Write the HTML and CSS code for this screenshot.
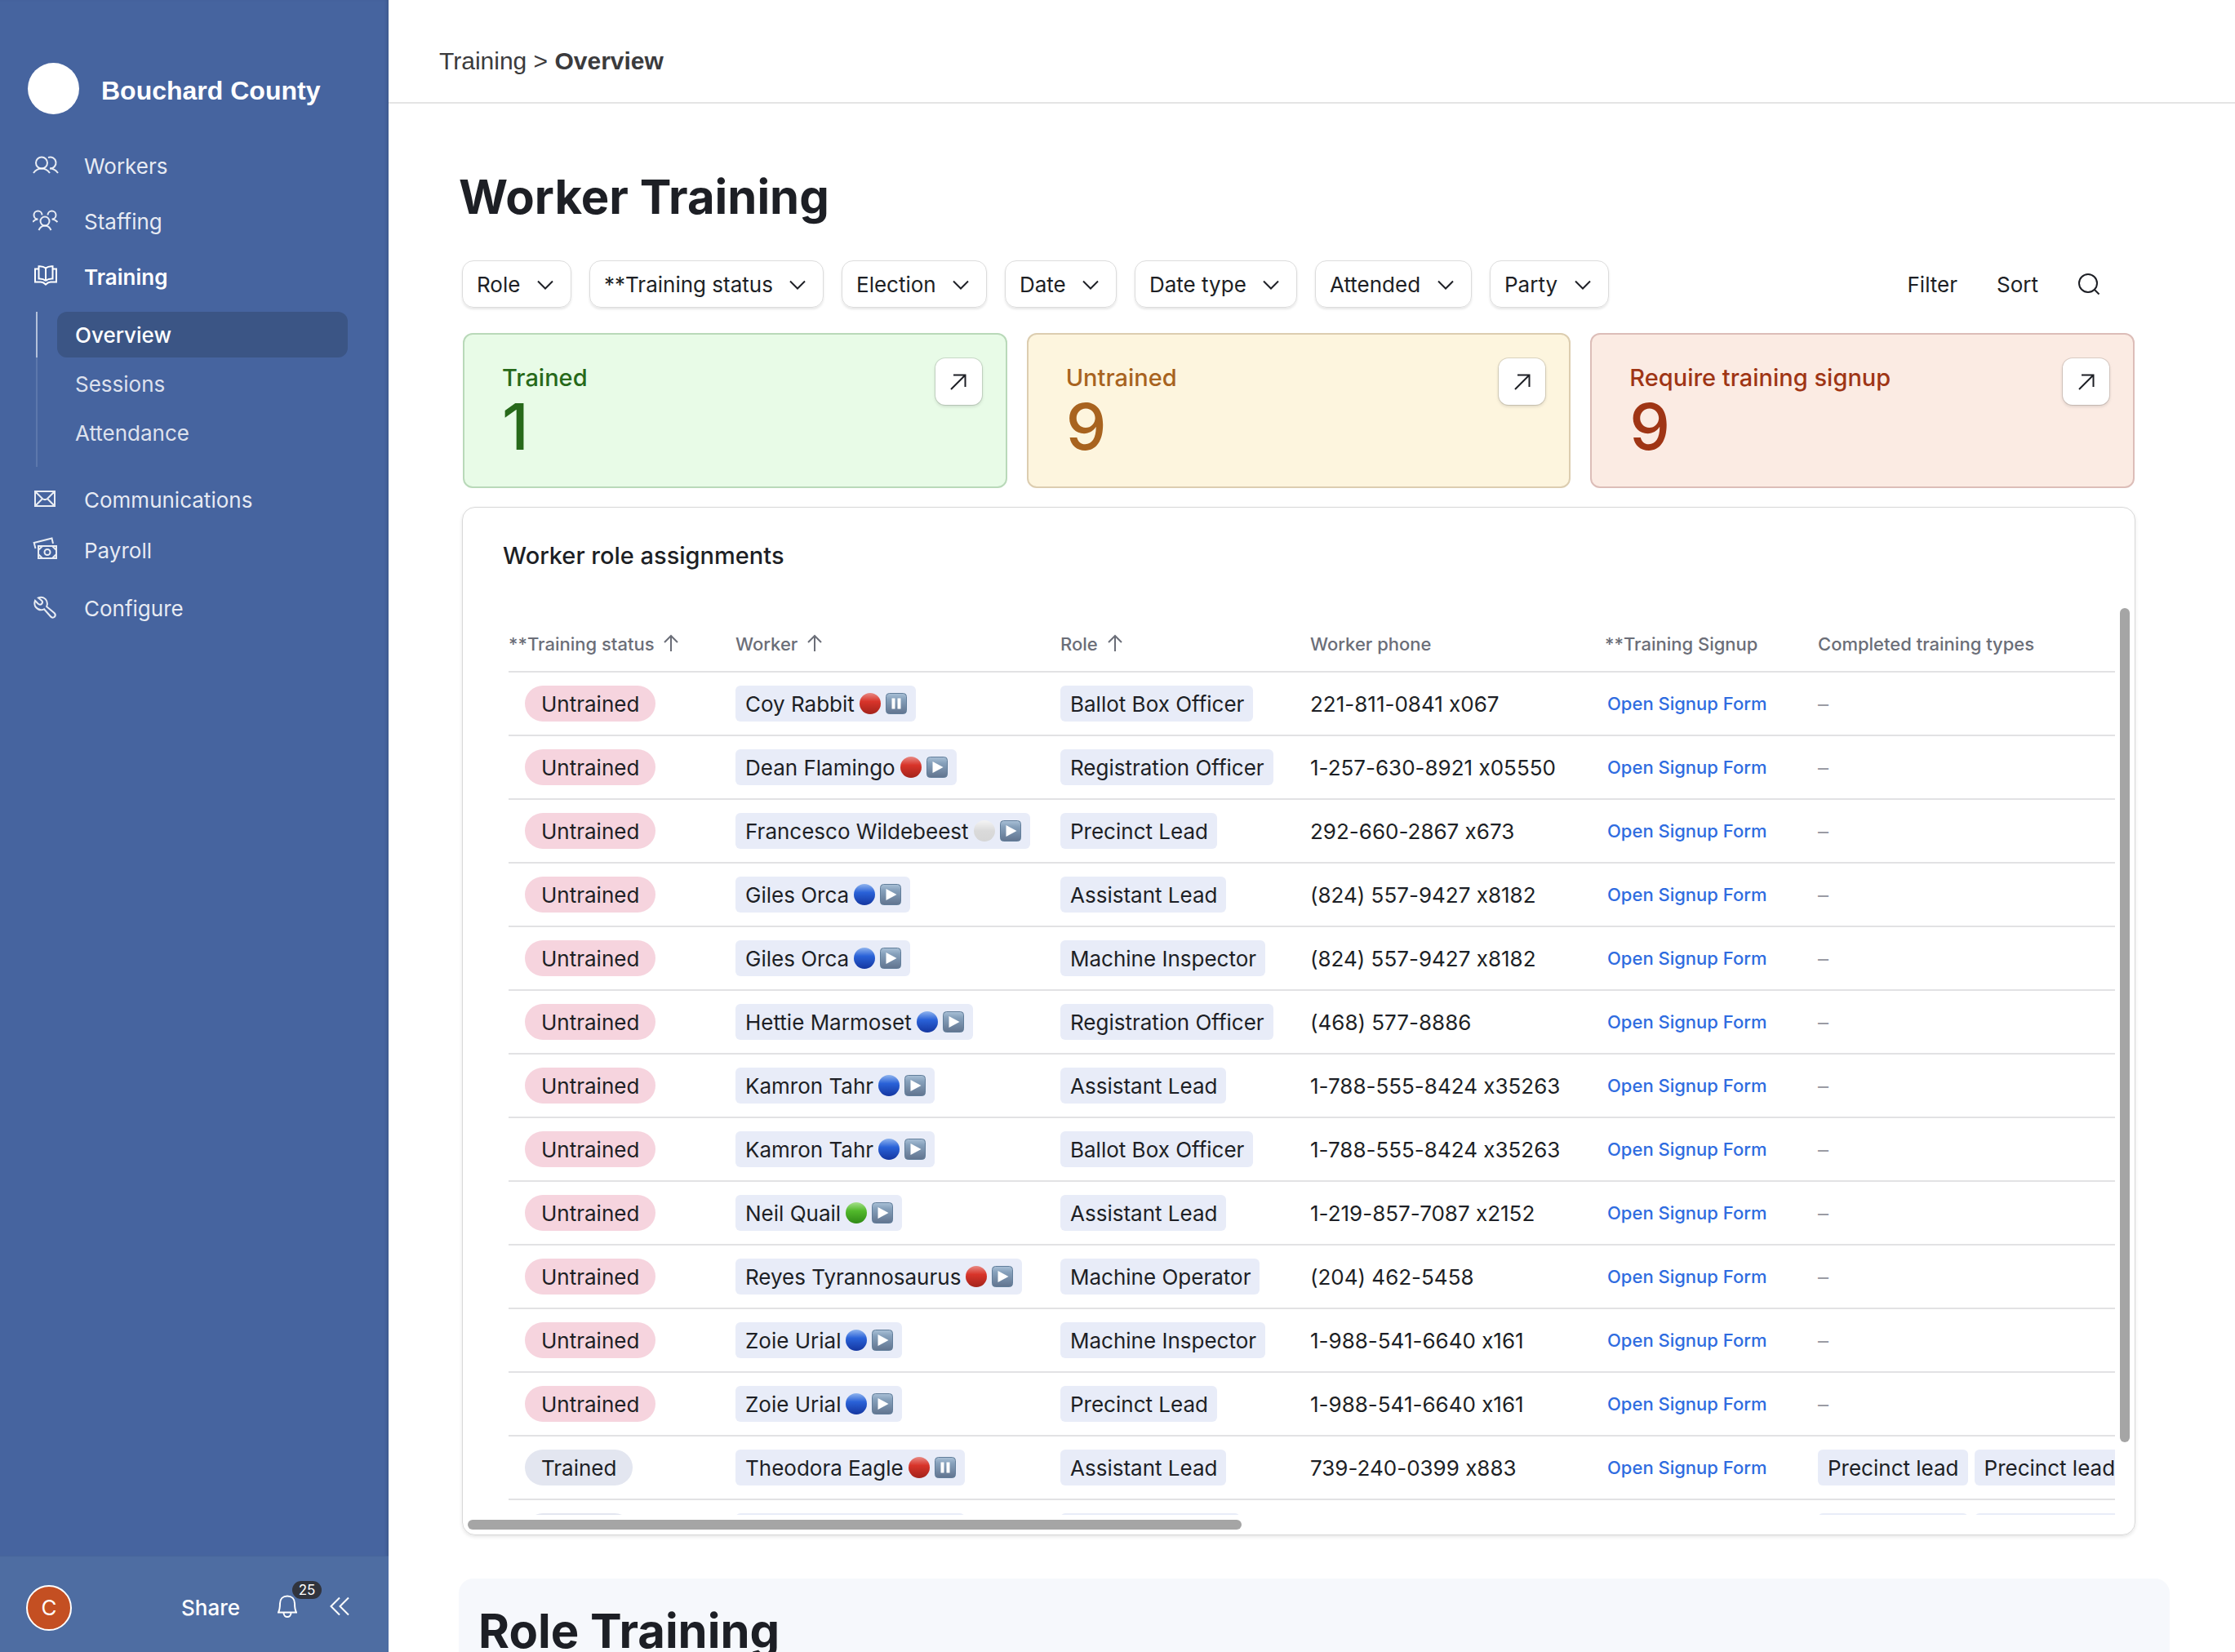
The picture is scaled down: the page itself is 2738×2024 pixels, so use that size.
FILE: index.html
```html
<!DOCTYPE html>
<html lang="en">
<head>
    <meta charset="UTF-8">
    <meta name="viewport" content="width=device-width, initial-scale=1.0">
    <title>Worker Training</title>
    <link rel="stylesheet" href="styles.css">
</head>
<body>

<!-- Shared icons -->
<svg class="sprite" aria-hidden="true">
    <defs>
        <linearGradient id="g-red" x1="0" y1="0" x2="0" y2="1">
            <stop offset="0" stop-color="#e88a84"/><stop offset="0.4" stop-color="#d8342a"/><stop offset="1" stop-color="#a3231b"/>
        </linearGradient>
        <linearGradient id="g-blue" x1="0" y1="0" x2="0" y2="1">
            <stop offset="0" stop-color="#8fb4ee"/><stop offset="0.4" stop-color="#2a62d8"/><stop offset="1" stop-color="#1436a0"/>
        </linearGradient>
        <linearGradient id="g-green" x1="0" y1="0" x2="0" y2="1">
            <stop offset="0" stop-color="#a5e08c"/><stop offset="0.4" stop-color="#52b92c"/><stop offset="1" stop-color="#2f8a16"/>
        </linearGradient>
        <linearGradient id="g-white" x1="0" y1="0" x2="0" y2="1">
            <stop offset="0" stop-color="#f4f4f4"/><stop offset="0.5" stop-color="#dadada"/><stop offset="1" stop-color="#d6d6d6"/>
        </linearGradient>
        <linearGradient id="g-key" x1="0" y1="0" x2="0" y2="1">
            <stop offset="0" stop-color="#a9c0d6"/><stop offset="0.3" stop-color="#86a0bb"/><stop offset="1" stop-color="#61748f"/>
        </linearGradient>
    </defs>
    <symbol id="red" viewBox="0 0 26 26"><circle cx="13" cy="13" r="13" fill="url(#g-red)"/></symbol>
    <symbol id="blue" viewBox="0 0 26 26"><circle cx="13" cy="13" r="13" fill="url(#g-blue)"/></symbol>
    <symbol id="green" viewBox="0 0 26 26"><circle cx="13" cy="13" r="13" fill="url(#g-green)"/></symbol>
    <symbol id="white" viewBox="0 0 26 26"><circle cx="13" cy="13" r="13" fill="url(#g-white)"/></symbol>
    <symbol id="play" viewBox="0 0 26 26">
        <rect x="0.5" y="0.5" width="25" height="25" rx="4" fill="url(#g-key)" stroke="#627e9b" stroke-width="1"/>
        <path d="M7.5 6 L20.5 13 L7.5 20 Z" fill="#fff"/>
    </symbol>
    <symbol id="pause" viewBox="0 0 26 26">
        <rect x="0.5" y="0.5" width="25" height="25" rx="4" fill="url(#g-key)" stroke="#627e9b" stroke-width="1"/>
        <path d="M7.5 6.5 H11.5 V19.5 H7.5 Z M14.5 6.5 H18.5 V19.5 H14.5 Z" fill="#fff"/>
    </symbol>
    <symbol id="chevron" viewBox="0 0 20 12"><path d="M1 1.5 L10 10.5 L19 1.5"/></symbol>
    <symbol id="arrow-up" viewBox="0 0 20 22"><path d="M10 21 V2 M2 10 L10 2 L18 10"/></symbol>
    <symbol id="arrow-open" viewBox="0 0 20 20"><path d="M1 19 L18.5 1.5 M4 1.5 H18.5 V16"/></symbol>
</svg>

<div class="app">
    <aside class="sidebar">
        <div class="brand">
            <span class="brand-logo"></span>
            <span class="brand-name">Bouchard County</span>
        </div>

        <nav class="nav">
            <ul class="nav-group">
                <li><a class="nav-link" href="#">
                    <svg class="nav-icon" viewBox="0 0 32 32"><circle cx="11" cy="12.5" r="7"/><path d="M1 25 C3.500 21.500 7 19.500 11 19.500 C15 19.500 18.500 21.500 21 25 M19 6 A7 7 0 1 1 21 19.500 C25.500 19.500 28.500 21.500 31 25"/></svg>
                    Workers</a></li>
                <li><a class="nav-link" href="#">
                    <svg class="nav-icon" viewBox="0 0 32 32"><circle cx="15" cy="16" r="5.5"/><path d="M7.500 27 C9 23.500 12 21.500 15 21.500 C18 21.500 21 23.500 22.500 27 M11.500 8.500 A5 5 0 1 0 6.500 13.500 C4 13.500 2 14.500 0 17 M18.500 8.500 A5 5 0 1 1 23.500 13.500 C26 13.500 28 14.500 30.500 17"/></svg>
                    Staffing</a></li>
                <li><a class="nav-link current" href="#">
                    <svg class="nav-icon" viewBox="0 0 32 32"><path d="M16 5.500 C13 3 10.500 3 7.500 3.200 V18.500 C10.500 18.300 13.500 18.800 16 21 M16 5.500 C19 3 21.500 3 24.500 3.200 V18.500 C21.500 18.300 18.500 18.800 16 21 M16 5.500 V21 M7.500 6.500 H3 V22.500 H10 C13 22.500 14.500 24 16 25.500 C17.500 24 19 22.500 22 22.500 H29 V6.500 H24.500"/></svg>
                    Training</a>
                    <ul class="subnav">
                        <li class="active"><a href="#">Overview</a></li>
                        <li><a href="#">Sessions</a></li>
                        <li><a href="#">Attendance</a></li>
                    </ul>
                </li>
            </ul>
            <ul class="nav-group compact">
                <li><a class="nav-link" href="#">
                    <svg class="nav-icon" viewBox="0 0 32 32"><path d="M3 6 H27 V24 H3 Z M3 6 L12 15 C14 16.500 16 16.500 18 15 L27 6 M3 24 L12 15 M27 24 L18 15"/></svg>
                    Communications</a></li>
                <li><a class="nav-link" href="#">
                    <svg class="nav-icon" viewBox="0 0 32 32"><path d="M3.500 14 L1.700 7 L23.500 1.500 L25 8 M7 11 H29 V26 H7 Z M7 16 L12 11 M24 11 L29 16 M7 21 L12 26 M24 26 L29 21"/><circle cx="18" cy="18.500" r="3.500"/></svg>
                    Payroll</a></li>
            </ul>
            <ul class="nav-group compact">
                <li><a class="nav-link" href="#">
                    <svg class="nav-icon" viewBox="0 0 32 32"><path d="M7 3.500 C11.500 1.500 16 4 17.300 7.500 C18.300 10 18 12 17.200 14.200 L26.500 22 C28 23.500 28 25.500 26.800 26.800 C25.500 28 23.500 28 22.200 26.500 L14 17.300 C10.500 19 6.500 18 4 15 C2 12.500 2 9.500 3 6.800 L6.500 10.500 C8 12 10 12 11.200 10.700 C12.300 9.500 12.200 8 11 6.800 Z"/></svg>
                    Configure</a></li>
            </ul>
        </nav>

        <div class="sidebar-footer">
            <span class="avatar">C</span>
            <button type="button" class="share">Share</button>
            <button type="button" class="bell" aria-label="Notifications">
                <svg width="24" height="28" viewBox="0 0 24 28"><path d="M1 21.500 C2.500 18.500 3 15.500 3 10.500 C3 5 6.500 1.500 12 1.500 C17.500 1.500 21 5 21 10.500 C21 15.500 21.500 18.500 23 21.500 Z M7.500 22 C7.500 28.500 16.500 28.500 16.500 22"/></svg>
                <span class="badge">25</span>
            </button>
            <button type="button" aria-label="Collapse sidebar">
                <svg width="24" height="24" viewBox="0 0 24 24"><path d="M12 1.500 L1.500 12 L12 22.500 M23 1.500 L12.500 12 L23 22.500"/></svg>
            </button>
        </div>
    </aside>

    <div class="page">
        <header class="topbar">
            <span>Training &gt; <strong>Overview</strong></span>
        </header>

        <main class="content">
            <h1>Worker Training</h1>

            <div class="toolbar">
                <span class="filter"><select aria-label="Role"><option>Role</option></select><svg><use href="#chevron"/></svg></span>
                <span class="filter"><select aria-label="Training status"><option>**Training status</option></select><svg><use href="#chevron"/></svg></span>
                <span class="filter"><select aria-label="Election"><option>Election</option></select><svg><use href="#chevron"/></svg></span>
                <span class="filter"><select aria-label="Date"><option>Date</option></select><svg><use href="#chevron"/></svg></span>
                <span class="filter"><select aria-label="Date type"><option>Date type</option></select><svg><use href="#chevron"/></svg></span>
                <span class="filter"><select aria-label="Attended"><option>Attended</option></select><svg><use href="#chevron"/></svg></span>
                <span class="filter"><select aria-label="Party"><option>Party</option></select><svg><use href="#chevron"/></svg></span>
                <div class="tools">
                    <button type="button">Filter</button>
                    <button type="button">Sort</button>
                    <button type="button" aria-label="Search">
                        <svg width="28" height="28" viewBox="0 0 28 28"><circle cx="13" cy="13" r="11"/><path d="M21 21 L26.500 26.500"/></svg>
                    </button>
                </div>
            </div>

            <section class="stats">
                <div class="stat green">
                    <div><h2>Trained</h2><p>1</p></div>
                    <button type="button" aria-label="Open trained"><svg><use href="#arrow-open"/></svg></button>
                </div>
                <div class="stat amber">
                    <div><h2>Untrained</h2><p>9</p></div>
                    <button type="button" aria-label="Open untrained"><svg><use href="#arrow-open"/></svg></button>
                </div>
                <div class="stat red">
                    <div><h2>Require training signup</h2><p>9</p></div>
                    <button type="button" aria-label="Open require training signup"><svg><use href="#arrow-open"/></svg></button>
                </div>
            </section>

            <section class="card">
                <h2>Worker role assignments</h2>
                <div class="scroller">
                    <div class="viewport">
                        <table>
                            <colgroup>
                                <col class="col-status"><col class="col-worker"><col class="col-role"><col class="col-phone"><col class="col-signup"><col class="col-types">
                            </colgroup>
                            <thead>
                                <tr>
                                    <th>**Training status <svg><use href="#arrow-up"/></svg></th>
                                    <th>Worker <svg><use href="#arrow-up"/></svg></th>
                                    <th>Role <svg><use href="#arrow-up"/></svg></th>
                                    <th>Worker phone</th>
                                    <th>**Training Signup</th>
                                    <th>Completed training types</th>
                                </tr>
                            </thead>
                            <tbody>
                                <tr>
                                    <td><span class="status">Untrained</span></td>
                                    <td><span class="chip">Coy Rabbit <svg><use href="#red"/></svg><svg><use href="#pause"/></svg></span></td>
                                    <td><span class="chip">Ballot Box Officer</span></td>
                                    <td>221-811-0841 x067</td>
                                    <td><a href="#">Open Signup Form</a></td>
                                    <td class="none">–</td>
                                </tr>
                                <tr>
                                    <td><span class="status">Untrained</span></td>
                                    <td><span class="chip">Dean Flamingo <svg><use href="#red"/></svg><svg><use href="#play"/></svg></span></td>
                                    <td><span class="chip">Registration Officer</span></td>
                                    <td>1-257-630-8921 x05550</td>
                                    <td><a href="#">Open Signup Form</a></td>
                                    <td class="none">–</td>
                                </tr>
                                <tr>
                                    <td><span class="status">Untrained</span></td>
                                    <td><span class="chip">Francesco Wildebeest <svg><use href="#white"/></svg><svg><use href="#play"/></svg></span></td>
                                    <td><span class="chip">Precinct Lead</span></td>
                                    <td>292-660-2867 x673</td>
                                    <td><a href="#">Open Signup Form</a></td>
                                    <td class="none">–</td>
                                </tr>
                                <tr>
                                    <td><span class="status">Untrained</span></td>
                                    <td><span class="chip">Giles Orca <svg><use href="#blue"/></svg><svg><use href="#play"/></svg></span></td>
                                    <td><span class="chip">Assistant Lead</span></td>
                                    <td>(824) 557-9427 x8182</td>
                                    <td><a href="#">Open Signup Form</a></td>
                                    <td class="none">–</td>
                                </tr>
                                <tr>
                                    <td><span class="status">Untrained</span></td>
                                    <td><span class="chip">Giles Orca <svg><use href="#blue"/></svg><svg><use href="#play"/></svg></span></td>
                                    <td><span class="chip">Machine Inspector</span></td>
                                    <td>(824) 557-9427 x8182</td>
                                    <td><a href="#">Open Signup Form</a></td>
                                    <td class="none">–</td>
                                </tr>
                                <tr>
                                    <td><span class="status">Untrained</span></td>
                                    <td><span class="chip">Hettie Marmoset <svg><use href="#blue"/></svg><svg><use href="#play"/></svg></span></td>
                                    <td><span class="chip">Registration Officer</span></td>
                                    <td>(468) 577-8886</td>
                                    <td><a href="#">Open Signup Form</a></td>
                                    <td class="none">–</td>
                                </tr>
                                <tr>
                                    <td><span class="status">Untrained</span></td>
                                    <td><span class="chip">Kamron Tahr <svg><use href="#blue"/></svg><svg><use href="#play"/></svg></span></td>
                                    <td><span class="chip">Assistant Lead</span></td>
                                    <td>1-788-555-8424 x35263</td>
                                    <td><a href="#">Open Signup Form</a></td>
                                    <td class="none">–</td>
                                </tr>
                                <tr>
                                    <td><span class="status">Untrained</span></td>
                                    <td><span class="chip">Kamron Tahr <svg><use href="#blue"/></svg><svg><use href="#play"/></svg></span></td>
                                    <td><span class="chip">Ballot Box Officer</span></td>
                                    <td>1-788-555-8424 x35263</td>
                                    <td><a href="#">Open Signup Form</a></td>
                                    <td class="none">–</td>
                                </tr>
                                <tr>
                                    <td><span class="status">Untrained</span></td>
                                    <td><span class="chip">Neil Quail <svg><use href="#green"/></svg><svg><use href="#play"/></svg></span></td>
                                    <td><span class="chip">Assistant Lead</span></td>
                                    <td>1-219-857-7087 x2152</td>
                                    <td><a href="#">Open Signup Form</a></td>
                                    <td class="none">–</td>
                                </tr>
                                <tr>
                                    <td><span class="status">Untrained</span></td>
                                    <td><span class="chip">Reyes Tyrannosaurus <svg><use href="#red"/></svg><svg><use href="#play"/></svg></span></td>
                                    <td><span class="chip">Machine Operator</span></td>
                                    <td>(204) 462-5458</td>
                                    <td><a href="#">Open Signup Form</a></td>
                                    <td class="none">–</td>
                                </tr>
                                <tr>
                                    <td><span class="status">Untrained</span></td>
                                    <td><span class="chip">Zoie Urial <svg><use href="#blue"/></svg><svg><use href="#play"/></svg></span></td>
                                    <td><span class="chip">Machine Inspector</span></td>
                                    <td>1-988-541-6640 x161</td>
                                    <td><a href="#">Open Signup Form</a></td>
                                    <td class="none">–</td>
                                </tr>
                                <tr>
                                    <td><span class="status">Untrained</span></td>
                                    <td><span class="chip">Zoie Urial <svg><use href="#blue"/></svg><svg><use href="#play"/></svg></span></td>
                                    <td><span class="chip">Precinct Lead</span></td>
                                    <td>1-988-541-6640 x161</td>
                                    <td><a href="#">Open Signup Form</a></td>
                                    <td class="none">–</td>
                                </tr>
                                <tr>
                                    <td><span class="status trained">Trained</span></td>
                                    <td><span class="chip">Theodora Eagle <svg><use href="#red"/></svg><svg><use href="#pause"/></svg></span></td>
                                    <td><span class="chip">Assistant Lead</span></td>
                                    <td>739-240-0399 x883</td>
                                    <td><a href="#">Open Signup Form</a></td>
                                    <td><span class="chip">Precinct lead</span><span class="chip">Precinct lead</span></td>
                                </tr>
                                <tr>
                                    <td><span class="status trained">Trained</span></td>
                                    <td><span class="chip">Theodora Eagle <svg><use href="#red"/></svg><svg><use href="#pause"/></svg></span></td>
                                    <td><span class="chip">Machine Officer</span></td>
                                    <td>739-240-0399 x883</td>
                                    <td><a href="#">Open Signup Form</a></td>
                                    <td><span class="chip">Precinct lead</span><span class="chip">Precinct lead</span></td>
                                </tr>
                            </tbody>
                        </table>
                    </div>
                    <div class="track-y"><div class="thumb"></div></div>
                    <div class="track-x"><div class="thumb"></div></div>
                </div>
            </section>

            <section class="role-training">
                <h1>Role Training</h1>
            </section>
        </main>
    </div>
</div>

</body>
</html>
```
FILE: styles.css
```css
* {
    box-sizing: border-box;
}
body {
    margin: 0;
    font-family: Inter, "Liberation Sans", sans-serif;
    font-size: 26px;
    font-variant-ligatures: no-contextual;
    color: #1d1f25;
    background: #fff;
}
h1, h2, p, ul {
    margin: 0;
    padding: 0;
}
ul {
    list-style: none;
}
a {
    text-decoration: none;
}
button, select {
    font: inherit;
    color: inherit;
    background: none;
    border: none;
    padding: 0;
    cursor: pointer;
}
svg {
    fill: none;
    stroke: currentColor;
    stroke-width: 2;
    flex: none;
}
.sprite {
    position: absolute;
    width: 0;
    height: 0;
}
.app {
    display: flex;
    height: 100vh;
}

/* Sidebar */
.sidebar {
    display: flex;
    flex-direction: column;
    flex: none;
    width: 476px;
    color: #fff;
    background: #46649f;
    box-shadow: inset -4px 0 4px -2px rgba(0, 0, 0, 0.12);
}
.brand {
    display: flex;
    align-items: center;
    gap: 27px;
    padding: 77px 34px 29px;
}
.brand-logo {
    width: 63px;
    height: 63px;
    border-radius: 50%;
    background: #fff;
}
.brand-name {
    padding-top: 4px;
    font: bold 32px/40px "Liberation Sans", Arial, sans-serif;
}
.nav {
    flex: 1;
}
.nav-link {
    display: flex;
    align-items: center;
    gap: 31px;
    height: 68px;
    padding-left: 40px;
    color: rgba(255, 255, 255, 0.88);
}
.nav-link.current {
    color: #fff;
    font-weight: 600;
}
.nav-icon {
    width: 32px;
    height: 32px;
}
.compact {
    margin-top: 9px;
}
.compact .nav-link {
    height: 62px;
}
.subnav {
    margin: 9px 50px 0 44px;
}
.subnav li {
    padding: 4px 0 0 24px;
    border-left: 2px solid #5d78ac;
}
.subnav li:last-child {
    padding-bottom: 14px;
}
.subnav .active {
    padding-top: 0;
    border-color: #b4c1da;
}
.subnav a {
    display: block;
    padding: 2px 0 0 22px;
    line-height: 54px;
    color: rgba(255, 255, 255, 0.84);
    border-radius: 12px;
}
.subnav .active a {
    color: #fff;
    font-weight: 500;
    background: #3b5585;
}
.sidebar-footer {
    display: flex;
    align-items: center;
    gap: 40px;
    height: 118px;
    padding: 8px 48px 0 32px;
    background: #4e6da2;
    border-top: 1px solid #46659a;
}
.avatar {
    width: 56px;
    height: 56px;
    line-height: 52px;
    text-align: center;
    border: 2px solid #fff;
    border-radius: 50%;
    background: #c44f22;
}
.share {
    margin-left: auto;
    padding-right: 6px;
    font-weight: 500;
}
.sidebar-footer button {
    display: flex;
}
.sidebar-footer svg {
    margin-bottom: 4px;
}
.bell {
    position: relative;
}
.badge {
    position: absolute;
    left: 18px;
    top: -17px;
    width: 36px;
    font-size: 17px;
    line-height: 22px;
    text-align: center;
    border-radius: 11px;
    background: #31343d;
}

/* Page */
.page {
    display: flex;
    flex-direction: column;
    flex: 1;
    min-width: 0;
}
.topbar {
    display: flex;
    align-items: center;
    flex: none;
    height: 127px;
    padding: 25px 62px 0;
    font-family: "Liberation Sans", Arial, sans-serif;
    font-size: 30px;
    color: #3b3b3d;
    border-bottom: 2px solid #e4e4e4;
}
.content {
    flex: 1;
    overflow-y: auto;
    scrollbar-width: none;
    padding: 76px 80px 0 86px;
}
h1 {
    font-size: 58px;
    line-height: 76px;
    font-weight: 700;
}
.toolbar {
    display: flex;
    align-items: center;
    gap: 22px;
    margin: 40px 43px 0 4px;
}
.filter {
    position: relative;
}
.filter select {
    display: block;
    appearance: none;
    height: 58px;
    padding: 0 61px 0 17px;
    border: 1px solid #dcdcdc;
    border-radius: 14px;
    box-shadow: 0 2px 3px rgba(0, 0, 0, 0.1);
}
.filter svg {
    position: absolute;
    right: 22px;
    top: 24px;
    width: 20px;
    height: 12px;
    pointer-events: none;
}
.tools {
    display: flex;
    align-items: center;
    gap: 48px;
    margin: 0 42px 0 auto;
}
.tools button {
    display: flex;
}
.stats {
    display: grid;
    grid-template-columns: repeat(3, 1fr);
    gap: 24px;
    margin: 31px 43px 0 5px;
}
.stat {
    display: flex;
    justify-content: space-between;
    align-items: flex-start;
    height: 190px;
    padding: 29px 29px 0 46px;
    border: 2px solid;
    border-radius: 12px;
}
.stat h2, .card h2 {
    font-size: 29px;
    line-height: 40px;
    font-weight: 500;
}
.stat h2 {
    margin-top: 4px;
}
.stat p {
    font-size: 79px;
    line-height: 78px;
    font-weight: 550;
}
.stat button {
    display: flex;
    align-items: center;
    justify-content: center;
    width: 57px;
    height: 57px;
    color: #1d1f25;
    background: #fff;
    border-radius: 12px;
    box-shadow: 0 0 0 1px rgba(0, 0, 0, 0.12), 0 2px 4px rgba(0, 0, 0, 0.14);
}
.stat svg {
    width: 20px;
    height: 20px;
}
.green {
    color: #27691a;
    background: #e8fbe7;
    border-color: #b9d9b9;
}
.amber {
    color: #a8631f;
    background: #fdf5de;
    border-color: #dccdb0;
}
.red {
    color: #9f3515;
    background: #fbebe3;
    border-color: #dcbdb8;
}

/* Assignments table */
.card {
    margin: 23px 42px 0 4px;
    border: 1px solid #d8d8d8;
    border-radius: 16px;
    box-shadow: 0 2px 4px rgba(0, 0, 0, 0.1);
}
.card h2 {
    padding: 39px 49px 44px;
}
.scroller {
    display: grid;
    grid-template-columns: minmax(0, 1fr) 12px;
    gap: 6px;
    padding: 0 6px 6px;
}
.viewport {
    height: 1111px;
    margin-left: 50px;
    overflow: hidden;
}
table {
    width: 2304px;
    table-layout: fixed;
    border-spacing: 0;
}
.col-status {
    width: 278px;
}
.col-worker {
    width: 398px;
}
.col-role {
    width: 306px;
}
.col-phone {
    width: 361px;
}
.col-signup {
    width: 261px;
}
th, td {
    padding: 0;
    text-align: left;
    white-space: nowrap;
    border-bottom: 2px solid #e2e2e4;
}
th {
    height: 79px;
    padding-top: 10px;
    font-size: 22px;
    font-weight: 500;
    color: #6b6e78;
}
th svg {
    width: 20px;
    height: 22px;
    margin-left: 5px;
    vertical-align: -2px;
}
td {
    height: 78px;
}
td a {
    display: block;
    margin-left: 3px;
    font-size: 22px;
    font-weight: 500;
    color: #2f6ce0;
}
.none {
    color: #9a9ba3;
}
.status, .chip {
    display: inline-flex;
    align-items: center;
    gap: 6px;
    height: 44px;
    vertical-align: middle;
}
.status {
    margin-left: 20px;
    padding: 0 20px;
    border-radius: 22px;
    background: #f6d4de;
}
.trained {
    background: #e3e6f0;
}
.chip {
    margin-right: 8px;
    padding: 0 11px 0 12px;
    border-radius: 6px;
    background: #e8ecf8;
}
.chip svg {
    width: 26px;
    height: 26px;
    stroke: none;
}
.track-x {
    grid-column: 1;
}
.thumb {
    border-radius: 6px;
    background: #a5a5a5;
}
.track-x .thumb {
    width: 47%;
    height: 12px;
}
.track-y .thumb {
    width: 12px;
    height: 92%;
}
.role-training {
    margin-top: 53px;
    padding: 26px 24px 60px;
    border-radius: 18px;
    background: #f6f8fc;
}
```
